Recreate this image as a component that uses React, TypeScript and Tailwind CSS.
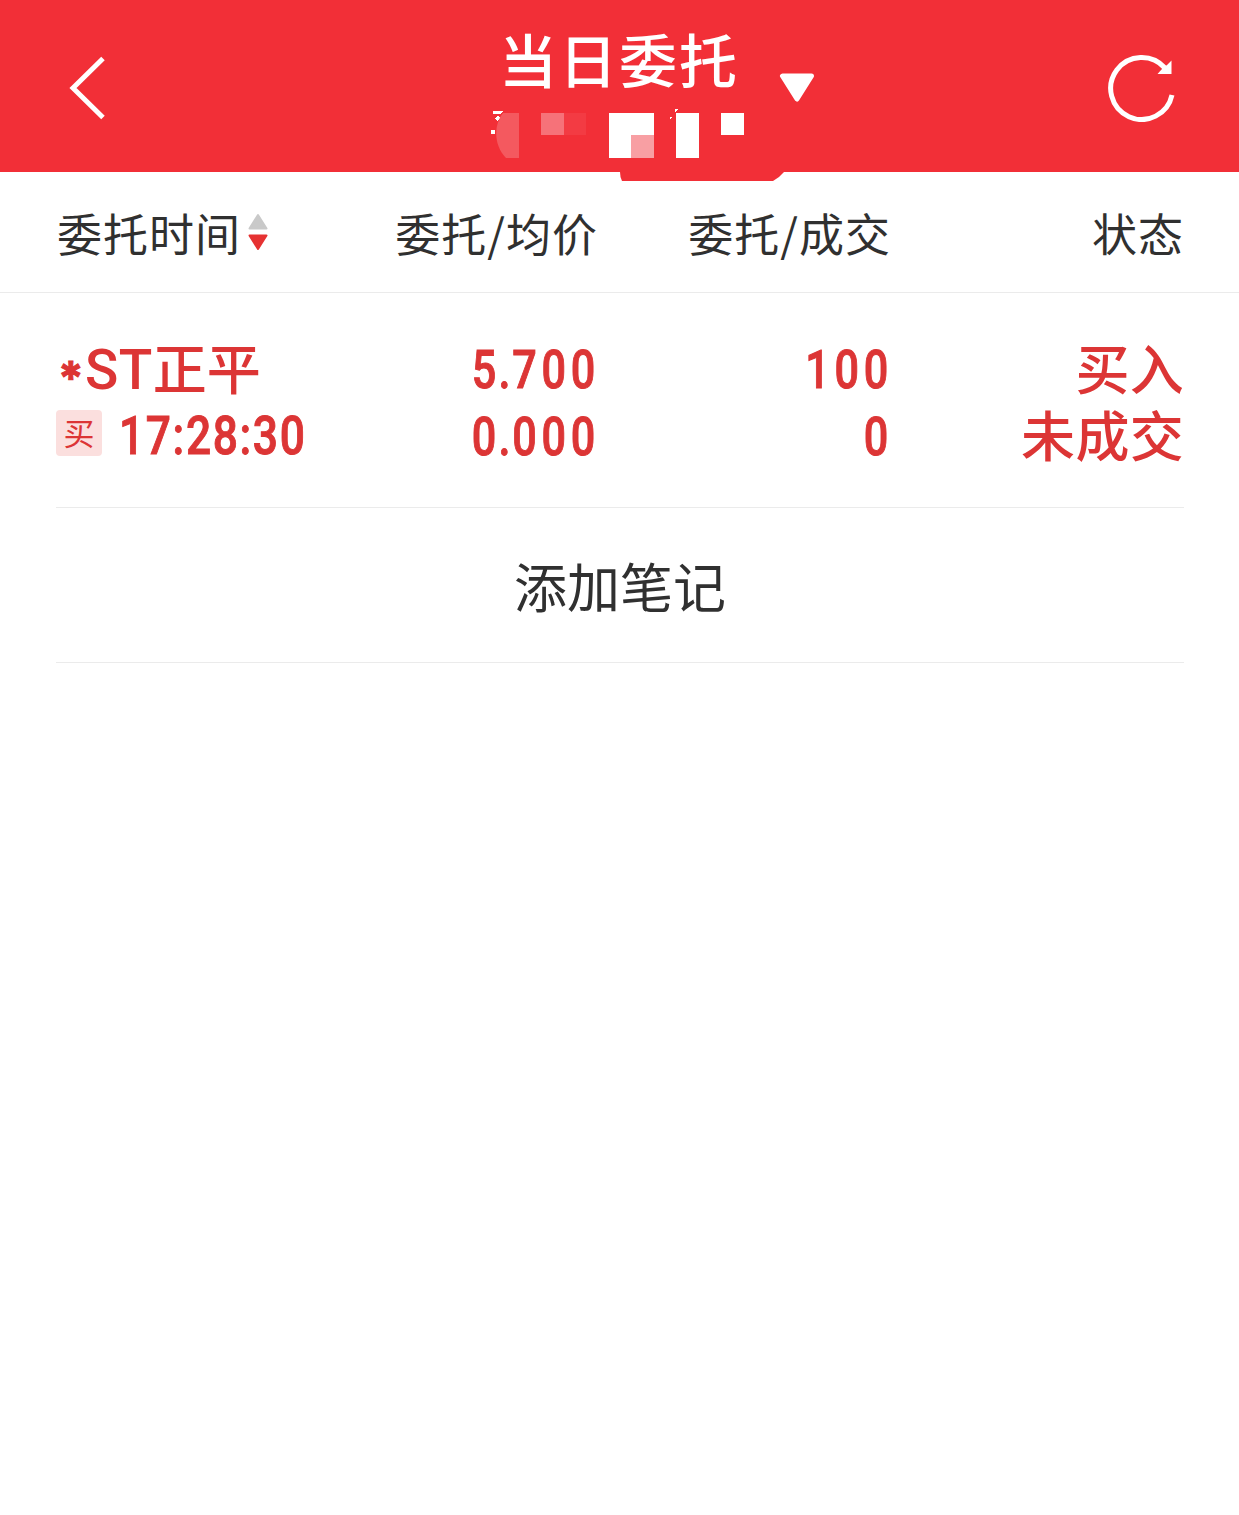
import React from "react"

const columns = ["委托/均价", "委托/成交", "状态"]

const order = {
  name: "正平",
  time: "17:28:30",
  price: "5.700",
  avgPrice: "0.000",
  amount: "100",
  filled: "0",
  side: "买入",
  status: "未成交"
}

function BackIcon() {
  return (
    <svg width="40" height="70" viewBox="0 0 40 70" fill="none">
      <path d="M36 5.500L6 35L36 64.500" stroke="#fff" strokeWidth="5" />
    </svg>
  )
}

function RefreshIcon() {
  return (
    <svg width="70" height="70" viewBox="0 0 70 70" fill="none">
      <path d="M58 16A31 31 0 1 0 65 43" stroke="#fff" strokeWidth="5" />
      <path d="M64.500 8.500V22H50.500L54.500 17.500L60 13Z" fill="#fff" />
    </svg>
  )
}

// account number hidden behind mosaic blocks
function MaskedAccount() {
  return (
    <svg width="300" height="74" viewBox="490 108 300 74" className="block max-w-none" shapeRendering="crispEdges">
      <path d="M493 111H503L501 113.500H493ZM495 118L498 116L500 118L497 121ZM491 130H495V134H491Z" fill="#fff" />
      <path d="M519 113H503C494 124 493 145 506 158H519Z" fill="#f4595f" shapeRendering="auto" />
      <rect x="541" y="113" width="23" height="22" fill="#f67279" />
      <rect x="564" y="113" width="22" height="22" fill="#f33b43" />
      <path d="M609 113H654V135H631V158H609Z" fill="#fff" />
      <rect x="631" y="135" width="23" height="23" fill="#f89fa3" />
      <path d="M676 113H699V158H676ZM721 113H744V135H721Z" fill="#fff" />
      <path d="M675 109H678L675 112ZM670 117H672L670 119Z" fill="#fff" />
      <path d="M620 171H784V172Q779 178 773 181H622Q620 177 620 172Z" fill="#f22f37" shapeRendering="auto" />
    </svg>
  )
}

function SortIcon() {
  return (
    <svg width="20" height="38" viewBox="0 0 20 38">
      <path d="M10 2L18.500 15.500H1.500Z" fill="#c9c9c9" stroke="#c9c9c9" strokeWidth="2" strokeLinejoin="round" />
      <path d="M10 36L18.500 22.500H1.500Z" fill="#e63232" stroke="#e63232" strokeWidth="2" strokeLinejoin="round" />
    </svg>
  )
}

// prices have a tight decimal point
function Price({ value }: { value: string }) {
  const [whole, decimals] = value.split(".")

  return (
    <div>
      {whole}<span className="-ml-[3px] tracking-[2px]">.</span>{decimals}
    </div>
  )
}

function App() {
  return (
    <div className="min-h-[1515px] w-full bg-white font-['Noto_Sans_CJK_SC',sans-serif] text-[#303030]">

      {/* HEADER */}
      <header className="flex h-[172px] items-start justify-between bg-[#f22f37] text-white">

        <button className="ml-[67px] mt-[53px] w-[423px]">
          <BackIcon />
        </button>

        <div className="w-[260px]">
          <h1 className="h-[108px] whitespace-nowrap pl-[9px] pt-[15px] text-[58px] font-medium leading-[87px] tracking-[2px]">
            当日委托
          </h1>
          <MaskedAccount />
        </div>

        <svg width="36" height="32" viewBox="0 0 36 32" className="ml-[29px] mt-[72px]">
          <path d="M3.500 4H32.500L18 27Z" fill="#fff" stroke="#fff" strokeWidth="5" strokeLinejoin="round" />
        </svg>

        <button className="ml-auto mr-[62px] mt-[52px]">
          <RefreshIcon />
        </button>

      </header>

      {/* COLUMN TITLES */}
      <div className="grid h-[121px] grid-cols-[248px_294px_293px_293px] border-b border-[#ebebeb] px-[56px] text-right text-[45px] leading-[122px] tracking-[1px]">

        <div className="flex h-[120px] items-center gap-[7px] whitespace-nowrap text-left">
          <span className="ml-[1px] mt-[2px]">委托时间</span>
          <SortIcon />
        </div>

        {columns.map((title) => (
          <div key={title} className="whitespace-nowrap">{title}</div>
        ))}

      </div>

      <main className="pl-[56px] pr-[55px]">

        {/* ORDER */}
        <section className="grid h-[215px] grid-cols-[248px_294px_293px_293px] border-b border-[#ebebeb] pt-[43px] text-right text-[54px] font-medium leading-[67px] text-[#dc3535]">

          <div className="whitespace-nowrap text-left">
            <div className="flex h-[67px] items-center">
              <span className="ml-[2px] w-[27px] pt-[17px] font-['Inter'] text-[46px] font-bold leading-[67px] [-webkit-text-stroke:1px_#dc3535]">*</span>
              <span className="pt-[2px] font-['Roboto'] text-[55px] tracking-[0.500px]">ST</span>
              <span className="-mt-[6px]">{order.name}</span>
            </div>
            <div className="-mt-[2px] flex h-[67px] items-center">
              <span className="-mt-[4px] flex size-[46px] shrink-0 items-center justify-center rounded-[4px] bg-[#fbdfde] pb-[2px] text-[31px] font-normal leading-none">买</span>
              <span className="ml-[17px] mt-[2px] origin-left scale-x-[0.82] font-['Roboto'] text-[54px] tracking-[2px] [-webkit-text-stroke:1px_#dc3535]">{order.time}</span>
            </div>
          </div>

          <div className="-mr-[2px] origin-right scale-x-[0.8] font-['Roboto'] tracking-[5.900px] [-webkit-text-stroke:1px_#dc3535]">
            <Price value={order.price} />
            <Price value={order.avgPrice} />
          </div>

          <div className="-mr-[2px] origin-right scale-x-[0.8] font-['Roboto'] tracking-[5.900px] [-webkit-text-stroke:1px_#dc3535]">
            <div>{order.amount}</div>
            <div>{order.filled}</div>
          </div>

          <div className="-mt-[3px] tracking-[0.300px]">
            <div>{order.side}</div>
            <div>{order.status}</div>
          </div>

        </section>

        {/* ADD NOTE */}
        <button className="block h-[155px] w-full border-b border-[#ebebeb] text-[53px] leading-[152px]">
          添加笔记
        </button>

      </main>

    </div>
  )
}

export default App
